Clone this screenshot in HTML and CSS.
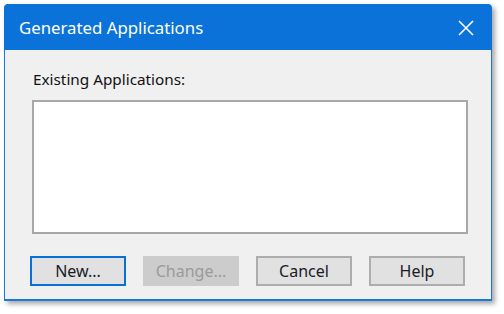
FILE: index.html
```html
<!DOCTYPE html>
<html>
<head>
<meta charset="utf-8">
<link rel="stylesheet" href="styles.css">
</head>
<body>
<div class="dialog">
  <div class="titlebar">
    <span class="title">Generated Applications</span>
    <svg class="close" width="16" height="16" viewBox="0 0 16 16"><path d="M1 1 L15 15 M15 1 L1 15" stroke="#ffffff" stroke-width="1.6" fill="none"/></svg>
  </div>
  <div class="content">
    <div class="label">Existing Applications:</div>
    <div class="listbox"></div>
    <div class="buttons">
      <button class="btn default">New...</button>
      <button class="btn disabled">Change...</button>
      <button class="btn">Cancel</button>
      <button class="btn">Help</button>
    </div>
  </div>
</div>
</body>
</html>
```
FILE: styles.css
```css
html, body {
  margin: 0;
  padding: 0;
  background: #ffffff;
}
body {
  width: 504px;
  height: 314px;
  padding: 4px 0 0 4px;
  box-sizing: border-box;
  font-family: "Noto Sans", "Open Sans", sans-serif;
}
.dialog {
  width: 488px;
  height: 297px;
  box-sizing: border-box;
  display: flex;
  flex-direction: column;
  border-radius: 4px 4px 0 0;
  box-shadow: 3px 3px 5px rgba(0,0,0,0.35);
  overflow: hidden;
}
.titlebar {
  height: 46px;
  background: #0a72d8;
  display: flex;
  align-items: center;
  justify-content: space-between;
  padding: 0 18px 0 15px;
  flex: none;
}
.title {
  color: #ffffff;
  font-size: 16.8px;
}
.close {
  display: block;
  margin-top: 1px;
}
.content {
  flex: 1;
  background: #f0f0f0;
  border: 1px solid #1a78d8;
  border-top: none;
  border-bottom-width: 2px;
  padding: 0 0 0 27px;
  display: flex;
  flex-direction: column;
}
.label {
  font-size: 15.3px;
  color: #111;
  margin-top: 20px;
  margin-left: 1px;
  line-height: 18px;
}
.listbox {
  width: 436px;
  height: 134px;
  box-sizing: border-box;
  background: #ffffff;
  border: 2px solid #a8a8a8;
  margin-top: 12px;
}
.buttons {
  display: flex;
  gap: 17px;
  margin-top: 22px;
  margin-left: -2px;
}
.btn {
  width: 96px;
  height: 30px;
  box-sizing: border-box;
  background: #e1e1e1;
  border: 2px solid #adadad;
  font-family: "Noto Sans", "Open Sans", sans-serif;
  font-size: 16px;
  color: #1a1a28;
  padding: 0;
}
.btn.default {
  border-color: #0a6fd6;
}
.btn.disabled {
  background: #cccccc;
  border-color: #cccccc;
  color: #9a9a9a;
}
```
